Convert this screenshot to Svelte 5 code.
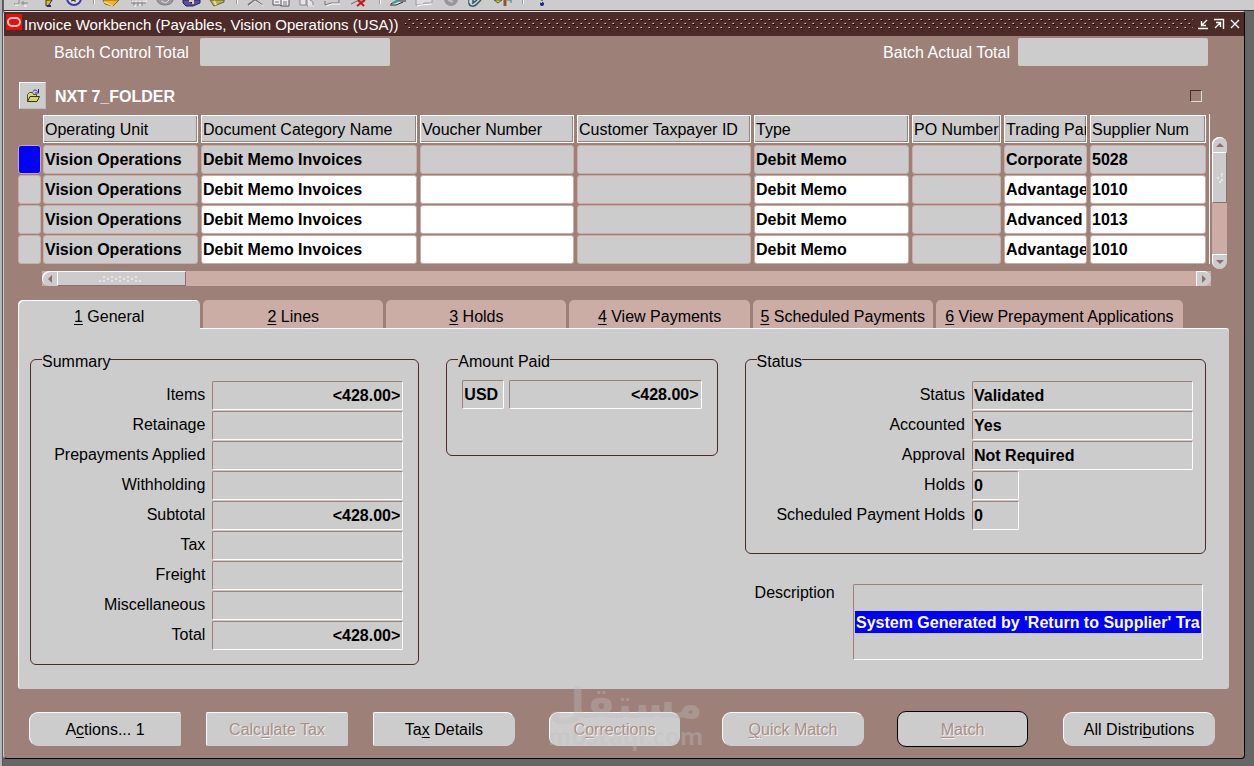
<script>
  const columns = [
    { name: 'Operating Unit', width: 158 },
    { name: 'Document Category Name', width: 219 },
    { name: 'Voucher Number', width: 157 },
    { name: 'Customer Taxpayer ID', width: 177 },
    { name: 'Type', width: 158 },
    { name: 'PO Number', width: 92 },
    { name: 'Trading Partner', width: 86 },
    { name: 'Supplier Num', width: 119 }
  ];
  const lockedColumns = [0, 3, 5];

  const invoices = [
    ['Vision Operations', 'Debit Memo Invoices', '', '', 'Debit Memo', '', 'Corporate Express', '5028'],
    ['Vision Operations', 'Debit Memo Invoices', '', '', 'Debit Memo', '', 'Advantage Corp', '1010'],
    ['Vision Operations', 'Debit Memo Invoices', '', '', 'Debit Memo', '', 'Advanced Network', '1013'],
    ['Vision Operations', 'Debit Memo Invoices', '', '', 'Debit Memo', '', 'Advantage Corp', '1010']
  ];

  const tabs = [
    { key: '1', name: 'General' },
    { key: '2', name: 'Lines' },
    { key: '3', name: 'Holds' },
    { key: '4', name: 'View Payments' },
    { key: '5', name: 'Scheduled Payments' },
    { key: '6', name: 'View Prepayment Applications', wide: true }
  ];

  const summary = [
    ['Items', '<428.00>'],
    ['Retainage', ''],
    ['Prepayments Applied', ''],
    ['Withholding', ''],
    ['Subtotal', '<428.00>'],
    ['Tax', ''],
    ['Freight', ''],
    ['Miscellaneous', ''],
    ['Total', '<428.00>']
  ];

  const status = [
    ['Status', 'Validated'],
    ['Accounted', 'Yes'],
    ['Approval', 'Not Required'],
    ['Holds', '0', true],
    ['Scheduled Payment Holds', '0', true]
  ];

  const actions = [
    { pre: 'A', key: 'c', post: 'tions... 1', shape: 'first large' },
    { pre: 'Calc', key: 'u', post: 'late Tax', shape: 'square medium', disabled: true },
    { pre: 'Ta', key: 'x', post: ' Details', shape: 'last medium' },
    { pre: 'C', key: 'o', post: 'rrections', shape: 'small', disabled: true },
    { pre: '', key: 'Q', post: 'uick Match', shape: 'medium', disabled: true },
    { pre: '', key: 'M', post: 'atch', shape: 'small default', disabled: true },
    { pre: 'All Distri', key: 'b', post: 'utions', shape: 'large' }
  ];

  let selectedRow = $state(0);
  let selectedTab = $state(0);
</script>

<div class="app">
  <div class="toolbar">
    <svg viewBox="0 0 26 10"><path d="M5 4H10M10 0V6M14 1V5M12 3H19" stroke="#888" fill="none" /><path d="M6 5H11M15 6H18" stroke="#fff" /></svg>
    <svg viewBox="0 0 26 10"><path d="M11 0H17L14 5L11 6Z" fill="#d9bd27" stroke="#333" /><path d="M12 6H16" stroke="#27259a" stroke-width="2" /></svg>
    <svg viewBox="0 0 26 10"><circle cx="13" cy="-2" r="7" fill="#ddd" stroke="#3d3b96" stroke-width="2" /><path d="M10 1L14 0V2" stroke="#222" fill="none" /></svg>
    <i></i>
    <svg viewBox="0 0 26 10"><path d="M3 0H19L13 6L5 4Z" fill="#f5b51e" stroke="#80632c" /><path d="M4 2L13 6" stroke="#fff09a" /></svg>
    <svg viewBox="0 0 26 10"><path d="M5 0H20M5 3H20M8 0V6M12 0V6M16 0V6" stroke="#858585" /><path d="M6 1H21M9 5V7M14 4V6" stroke="#fff" /></svg>
    <svg viewBox="0 0 26 10"><ellipse cx="13" cy="0" rx="8" ry="5" fill="#999" stroke="#7c7c7c" /><path d="M9 1L14 3L17 0" stroke="#ddd" fill="none" /></svg>
    <svg viewBox="0 0 26 10"><path d="M5 0H22V3L15 6H8L5 3Z" fill="#555299" stroke="#262348" /><path d="M11 1H15V4" stroke="#e4c4cc" stroke-width="2" /></svg>
    <svg viewBox="0 0 26 10"><path d="M6 0L10 6L20 2V0Z" fill="#b3b157" stroke="#646225" /><path d="M10 1L12 5" stroke="#e4e3a0" stroke-width="2" /></svg>
    <i></i>
    <svg viewBox="0 0 26 10"><path d="M5 5L12 0M12 0L19 5" stroke="#777" stroke-width="2" /><path d="M6 6L12 1L20 6" stroke="#eee" fill="none" /></svg>
    <svg viewBox="0 0 26 10"><path d="M4 0V5H11L12 6H20V0M12 0V6" fill="#eee" stroke="#555" /><path d="M6 2H10M14 2H18M14 4H18" stroke="#777" /></svg>
    <svg viewBox="0 0 26 10"><path d="M5 0V5H11V0M12 0V6H18V2L15 0" fill="#e5e5e5" stroke="#888" /><path d="M13 6H19" stroke="#fff" /></svg>
    <svg viewBox="0 0 26 10"><path d="M4 5L10 3H18V0M4 1V5" fill="none" stroke="#777" /><path d="M5 6L11 4H19" stroke="#fff" fill="none" /></svg>
    <svg viewBox="0 0 26 10"><path d="M4 4L10 1H18" fill="none" stroke="#666" /><path d="M11 0L17 6M18 0L10 6" stroke="#c5161b" stroke-width="2" /></svg>
    <i></i>
    <svg viewBox="0 0 26 10"><path d="M5 4L10 1H20M4 5H10L17 2" fill="#fff" stroke="#222" /><path d="M7 3L12 1" stroke="#2aa1a4" stroke-width="2" /></svg>
    <svg viewBox="0 0 26 10"><path d="M4 0V5H10L12 3H20V0" fill="#ddd" stroke="#999" /><path d="M5 6L10 5L20 4" stroke="#fff" fill="none" /></svg>
    <svg viewBox="0 0 26 10"><circle cx="13" cy="-1" r="7" fill="#969696" /><path d="M10 0L15 2" stroke="#c1c1c1" stroke-width="2" /></svg>
    <svg viewBox="0 0 26 10"><path d="M5 0V3C5 7 11 7 13 4L17 0M9 0V3L13 0" fill="none" stroke="#2f5b68" stroke-width="1.500" /><path d="M6 0V3" stroke="#dff" /></svg>
    <svg viewBox="0 0 26 10"><path d="M4 0L8 3L12 0Z" fill="#d9d523" stroke="#555" /><path d="M15 0V6" stroke="#8c5536" stroke-width="3" /><path d="M17 0H21V3" stroke="#347e7a" fill="none" /></svg>
    <i></i>
    <svg viewBox="0 0 26 10"><circle cx="13" cy="4" r="2" fill="#191988" /><path d="M12 3L13 2" stroke="#ccd" /><path d="M13 0V1" stroke="#191988" /></svg>
  </div>

  <main class="window">
    <header class="titlebar">
      <svg class="logo" viewBox="0 0 16 16"><rect width="16" height="16" fill="#e60f0f" /><rect x="2" y="4" width="12" height="8" rx="4" fill="none" stroke="#ffc9c4" stroke-width="2" /></svg>
      <h1>Invoice Workbench (Payables, Vision Operations (USA))</h1>
      <svg class="grip" aria-hidden="true">
        <defs>
          <pattern id="grip-dots" width="8" height="8" patternUnits="userSpaceOnUse">
            <rect x="4" width="1" height="1" fill="#e3c5bd" /><rect x="3" width="1" height="1" fill="#9d8078" /><rect x="4" y="1" width="2" height="1" fill="#140605" />
            <rect y="4" width="1" height="1" fill="#e3c5bd" /><rect x="7" y="4" width="1" height="1" fill="#9d8078" /><rect y="5" width="2" height="1" fill="#140605" />
          </pattern>
        </defs>
        <rect width="100%" height="10" fill="url(#grip-dots)" />
      </svg>
      <button aria-label="Minimize"><svg viewBox="0 0 16 16"><path d="M3 12.500H13M12 4L7 9M6.500 5V9.500H11" /></svg></button>
      <button aria-label="Maximize"><svg viewBox="0 0 16 16"><path d="M3 3.500H12.500V13M4 12L9 7M5 6.500H9.500V11" /></svg></button>
      <button aria-label="Close"><svg viewBox="0 0 16 16"><path d="M4 4L12 12M12 4L4 12" /></svg></button>
    </header>

    <div class="batch">
      <label><span>Batch Control Total</span> <input readonly /></label>
      <label><span>Batch Actual Total</span> <input readonly /></label>
    </div>

    <div class="folder">
      <button aria-label="Open folder">
        <svg viewBox="0 0 16 16"><path d="M2.500 13.500V6.500L4.500 4.500H7.500L8.500 6.500H11.500V8.500" fill="#d8d58a" stroke="#55551c" /><path d="M2.500 13.500L5 8.500H14.500L12 13.500Z" fill="#d8d66a" stroke="#33330c" /><path d="M8 3.500C9 1.500 11 1.500 12.500 3.500M13.500 1V5H10" fill="none" stroke="#2222a8" /></svg>
      </button>
      <h2>NXT 7_FOLDER</h2>
      <input type="checkbox" aria-label="Select all" />
    </div>

    <div class="records">
      <div class="sheet">
        <table>
          <colgroup>
            <col style="width: 25px" />
            {#each columns as column}<col style="width: {column.width}px" />{/each}
            <col style="width: 2px" />
          </colgroup>
          <thead>
            <tr>
              <td></td>
              {#each columns as column}<th scope="col"><div>{column.name}</div></th>{/each}
              <td class="edge"></td>
            </tr>
          </thead>
          <tbody>
            {#each invoices as invoice, row}
              <tr>
                <td><button class="marker" class:current={row === selectedRow} aria-label="Record {row + 1}" onclick={() => (selectedRow = row)}></button></td>
                {#each invoice as value, i}
                  <td><input class:editable={row > 0 && !lockedColumns.includes(i)} aria-label={columns[i].name} {value} readonly /></td>
                {/each}
                <td class="edge"></td>
              </tr>
            {/each}
          </tbody>
        </table>
        <div class="hscroll">
          <button class="left" aria-label="Scroll left"><svg viewBox="0 0 6 10"><path d="M5 1V9L1 5Z" /></svg></button>
          <div class="thumb">
            <svg viewBox="0 0 46 8"><path d="M1 6h2M5 2h2M5 6h2M9 4h2M13 2h2M13 6h2M17 4h2M21 2h2M21 6h2M25 4h2M29 2h2M29 6h2M33 4h2M37 2h2M37 6h2M41 6h2" /></svg>
          </div>
          <button class="right" aria-label="Scroll right"><svg viewBox="0 0 6 10"><path d="M1 1V9L5 5Z" /></svg></button>
        </div>
      </div>
      <div class="vscroll">
        <button class="up" aria-label="Scroll up"><svg viewBox="0 0 10 6"><path d="M1 5H9L5 1Z" /></svg></button>
        <div class="thumb">
          <svg viewBox="0 0 8 14"><path d="M5 3h2M1 7h2M5 9h2M3 11h2M5 5h1" /></svg>
        </div>
        <button class="down" aria-label="Scroll down"><svg viewBox="0 0 10 6"><path d="M1 1H9L5 5Z" /></svg></button>
      </div>
    </div>

    <div class="tabs" role="tablist">
      {#each tabs as tab, i}
        <button role="tab" aria-selected={i === selectedTab} class:wide={tab.wide} onclick={() => (selectedTab = i)}><u>{tab.key}</u> {tab.name}</button>
      {/each}
    </div>

    <section class="panel">
      <fieldset class="summary">
        <legend>Summary</legend>
        {#each summary as [name, value]}
          <label class="row">{name} <input class="amount" {value} readonly /></label>
        {/each}
      </fieldset>

      <fieldset class="paid">
        <legend>Amount Paid</legend>
        <div class="pair">
          <input class="currency" aria-label="Currency" value="USD" readonly />
          <input class="amount" aria-label="Amount" value="<428.00>" readonly />
        </div>
      </fieldset>

      <div>
        <fieldset class="status">
          <legend>Status</legend>
          {#each status as [name, value, short]}
            <label class="row">{name} <input class:short {value} readonly /></label>
          {/each}
        </fieldset>
        <div class="description">
          <label for="description">Description</label>
          <div class="box"><input id="description" value="System Generated by 'Return to Supplier' Transaction" readonly /></div>
        </div>
      </div>
    </section>

    <footer>
      {#each actions as action}
        <button class={action.shape} disabled={action.disabled}>{action.pre}<u>{action.key}</u>{action.post}</button>
      {/each}
      <div class="watermark" aria-hidden="true">
        <span class="arabic" lang="ar">مستقل</span>
        <span class="domain">mostaql.com</span>
      </div>
    </footer>
  </main>
</div>

<style>
  :global(body) {
    margin: 0;
    background: #666;
  }

  .app {
    --face: #ccc;
    --mauve: #9d8078;
    --pink: #cbada6;
    --dark: #4c2b28;
    display: flow-root;
    min-height: 100vh;
    box-sizing: border-box;
    overflow: hidden;
    font: 16px/18px "Liberation Sans", Arial, sans-serif;
    color: #000;
    background: linear-gradient(90deg, #b5b5b5 2px, #555 2px 3px, transparent 3px);
  }

  .app :is(input, button) {
    box-sizing: border-box;
    margin: 0;
    padding: 0;
    border: 0;
    font: inherit;
    color: inherit;
  }

  h1, h2 {
    margin: 0;
    font-size: 16px;
  }

  u {
    text-underline-offset: 2px;
  }

  .toolbar {
    display: flex;
    height: 10px;
    margin-left: 4px;
    padding-left: 5px;
    background: var(--face);
    border-bottom: 1px solid var(--dark);
  }

  .toolbar svg {
    width: 26px;
    height: 10px;
  }

  .toolbar i {
    width: 2px;
    height: 4px;
    margin: 0 5px 0 6px;
    background: linear-gradient(90deg, #999 1px, #fff 1px);
  }

  .window {
    margin: 0 9px 0 3px;
    background: var(--mauve);
    border: 1px solid #000;
    border-color: #ddd #000 #000 #ccc;
    border-radius: 3px 3px 4px 4px;
  }

  .titlebar {
    display: flex;
    align-items: center;
    height: 24px;
    padding: 0 1px 0 2px;
    background: var(--dark);
    color: #fff;
  }

  .titlebar .logo {
    width: 16px;
    height: 16px;
    margin: 0 2px 4px 0;
  }

  .titlebar h1 {
    padding-top: 2px;
    font-size: 15px;
    font-weight: normal;
    white-space: nowrap;
  }

  .titlebar .grip {
    flex: 1;
    min-width: 0;
    height: 10px;
    margin: 0 2px 0 6px;
  }

  .titlebar button {
    display: flex;
    background: none;
  }

  .titlebar button svg {
    width: 16px;
    height: 16px;
    fill: none;
    stroke: #fff;
    stroke-width: 1.4;
  }

  .batch {
    display: flex;
    justify-content: space-between;
    padding: 2px 36px 0 50px;
    color: #fff;
  }

  .batch label {
    display: flex;
    align-items: center;
    gap: 8px;
  }

  .batch span {
    width: 138px;
    padding-top: 2px;
  }

  .batch label + label span {
    text-align: right;
  }

  .batch input {
    width: 190px;
    height: 28px;
    background: var(--face);
    border: 1px solid #d8c6c1;
    border-top-color: var(--face);
    border-radius: 2px;
  }

  .folder {
    display: flex;
    align-items: center;
    gap: 9px;
    padding: 16px 42px 5px 15px;
    color: #fff;
  }

  .folder h2 {
    padding-top: 2px;
  }

  .folder button {
    display: grid;
    place-items: center;
    width: 27px;
    height: 27px;
    background: var(--face);
    border: 1px solid #fff;
    border-color: #fff #bbb #bbb #fff;
  }

  .folder button svg {
    width: 16px;
    height: 16px;
  }

  .folder input {
    appearance: none;
    width: 12px;
    height: 12px;
    margin-left: auto;
    border: 1px solid var(--dark);
    border-color: var(--dark) #ddd #ddd var(--dark);
  }

  .app .folder input {
    border: 1px solid var(--dark);
    border-color: var(--dark) #ddd #ddd var(--dark);
  }

  .records {
    display: grid;
    grid-template-columns: minmax(0, 1fr) 15px;
    gap: 1px;
    padding: 0 17px 0 14px;
  }

  table {
    width: 100%;
    table-layout: fixed;
    border-spacing: 0;
  }

  th, td {
    height: 30px;
    padding: 0 3px 0 0;
    vertical-align: middle;
  }

  th div {
    height: 28px;
    padding-left: 1px;
    overflow: hidden;
    white-space: nowrap;
    text-align: left;
    font-weight: normal;
    line-height: 28px;
    background: var(--face);
    border: 1px solid #fff;
    box-shadow: inset -1px -1px #8f8480;
    box-sizing: border-box;
  }

  td input, .marker {
    display: block;
    width: 100%;
    height: 29px;
    background: var(--face);
    border-radius: 3px;
  }

  .app td input {
    padding: 2px 0 0 1px;
    font-weight: bold;
    border: 1px solid var(--pink);
  }

  td input.editable {
    background: #fff;
  }

  .app .marker {
    width: 23px;
    border: 1px solid var(--pink);
  }

  .marker.current {
    background: #00f;
  }

  .edge {
    padding: 0;
    border-left: 1px solid #fff;
  }

  .thumb svg {
    stroke: #fff;
    stroke-width: 1;
  }

  .hscroll {
    display: flex;
    height: 15px;
    margin: 7px 0 0 24px;
    background: var(--pink);
  }

  .hscroll button, .vscroll button {
    display: grid;
    place-items: center;
    background: var(--face);
    box-shadow: inset 1px 1px #fff;
  }

  .hscroll button {
    width: 15px;
    border-radius: 8px 0 0 8px;
  }

  .hscroll .right {
    margin-left: auto;
    border-radius: 0 8px 8px 0;
  }

  .hscroll button svg {
    width: 6px;
    height: 10px;
    fill: #8a706a;
  }

  .thumb {
    display: grid;
    place-items: center;
    box-sizing: border-box;
    background: var(--face);
    border: 1px solid #fff;
    border-color: #fff #8a706a #8a706a #fff;
  }

  .hscroll .thumb {
    width: 11%;
  }

  .hscroll .thumb svg {
    width: 46px;
    height: 8px;
  }

  .vscroll {
    display: flex;
    flex-direction: column;
    margin: 23px 0 17px;
    background: var(--pink);
    border-radius: 8px;
  }

  .vscroll button {
    width: 15px;
    height: 15px;
    border-radius: 8px 8px 0 0;
  }

  .vscroll .down {
    margin-top: auto;
    border-radius: 0 0 8px 8px;
  }

  .vscroll button svg {
    width: 10px;
    height: 6px;
    fill: #8a706a;
  }

  .vscroll .thumb {
    height: 51px;
  }

  .vscroll .thumb svg {
    width: 8px;
    height: 14px;
  }

  .tabs {
    display: flex;
    gap: 3px;
    padding: 14px 61px 0 14px;
  }

  .app .tabs button {
    flex: 180 1 0;
    height: 28px;
    padding-top: 6px;
    white-space: nowrap;
    background: var(--pink);
    border-radius: 5px 5px 0 0;
  }

  .app .tabs button.wide {
    flex-grow: 247;
  }

  .app .tabs button[aria-selected="true"] {
    flex-grow: 182;
    height: 29px;
    margin-bottom: -1px;
    padding-bottom: 1px;
    background: var(--face);
    box-shadow: inset 1px 1px #fff;
  }

  .panel {
    display: grid;
    grid-template-columns: 389fr 271fr 461fr;
    gap: 27px;
    align-items: start;
    margin: 0 15px 0 14px;
    padding: 18px 23px 24px 11px;
    background: var(--face);
    border: 0 solid #fff;
    border-width: 1px 0 0 1px;
    border-radius: 0 3px 3px 3px;
  }

  fieldset {
    min-width: 0;
    margin: 0;
    border: 1px solid var(--dark);
    border-radius: 6px;
  }

  legend {
    padding: 6px 0 0;
  }

  .summary {
    padding: 9px 15px 14px 11px;
  }

  .paid {
    padding: 9px 15px 46px 11px;
  }

  .status {
    padding: 9px 12px 23px 11px;
  }

  .row {
    display: grid;
    grid-template-columns: 1fr 191px;
    gap: 7px;
    align-items: center;
    height: 30px;
    text-align: right;
    white-space: nowrap;
  }

  .status .row {
    grid-template-columns: 1fr 221px;
  }

  .app :is(.row, .pair) input {
    width: 100%;
    height: 29px;
    padding: 1px 2px 0 1px;
    font-weight: bold;
    background: var(--face);
    border: 1px solid #fff;
    border-color: var(--mauve) #fff #fff var(--mauve);
    border-radius: 2px;
  }

  .app input.amount {
    text-align: right;
  }

  .app .row input.short {
    width: 47px;
  }

  .pair {
    display: grid;
    grid-template-columns: 42px 1fr;
    gap: 5px;
    padding-left: 4px;
  }

  .description {
    display: flex;
    justify-content: space-between;
    align-items: flex-start;
    gap: 15px;
    margin-top: 30px;
    padding: 0 3px 0 10px;
  }

  .description .box {
    flex: 0 1 350px;
    min-width: 0;
    box-sizing: border-box;
    padding: 26px 1px;
    border: 1px solid #fff;
    border-color: var(--mauve) #fff #fff var(--mauve);
    border-radius: 2px;
  }

  .app .description input {
    display: block;
    width: 100%;
    height: 22px;
    padding: 1px 1px 0;
    font-weight: bold;
    color: #fff;
    background: #00f;
  }

  footer {
    position: relative;
    display: grid;
    grid-template-columns: 177fr 167fr 176fr 173fr 175fr 166fr 152fr;
    align-items: center;
    padding: 22px 29px 11px 25px;
  }

  .app footer button {
    width: 142px;
    height: 34px;
    padding-top: 2px;
    white-space: nowrap;
    background: var(--face);
    border: 1px solid #fff;
    border-color: #fff var(--face) var(--face) #fff;
    border-radius: 9px;
  }

  .app footer .large {
    width: 152px;
  }

  .app footer .small {
    width: 131px;
  }

  .app footer .first {
    border-radius: 9px 2px 2px 9px;
  }

  .app footer .square {
    border-radius: 2px;
  }

  .app footer .last {
    border-radius: 2px 9px 9px 2px;
  }

  .app footer .default {
    height: 36px;
    border-color: #000;
  }

  .app footer button:disabled {
    color: #a88f88;
    text-shadow: 1px 1px #f4eeec;
  }

  .watermark {
    position: absolute;
    bottom: 9px;
    left: 44%;
    display: flex;
    flex-direction: column;
    align-items: center;
    width: 152px;
    color: rgba(192, 192, 192, 0.34);
    pointer-events: none;
    white-space: nowrap;
  }

  .arabic {
    font: bold 42px/38px "DejaVu Sans", sans-serif;
  }

  .domain {
    font: bold 24px/26px "Open Sans", sans-serif;
  }
</style>
